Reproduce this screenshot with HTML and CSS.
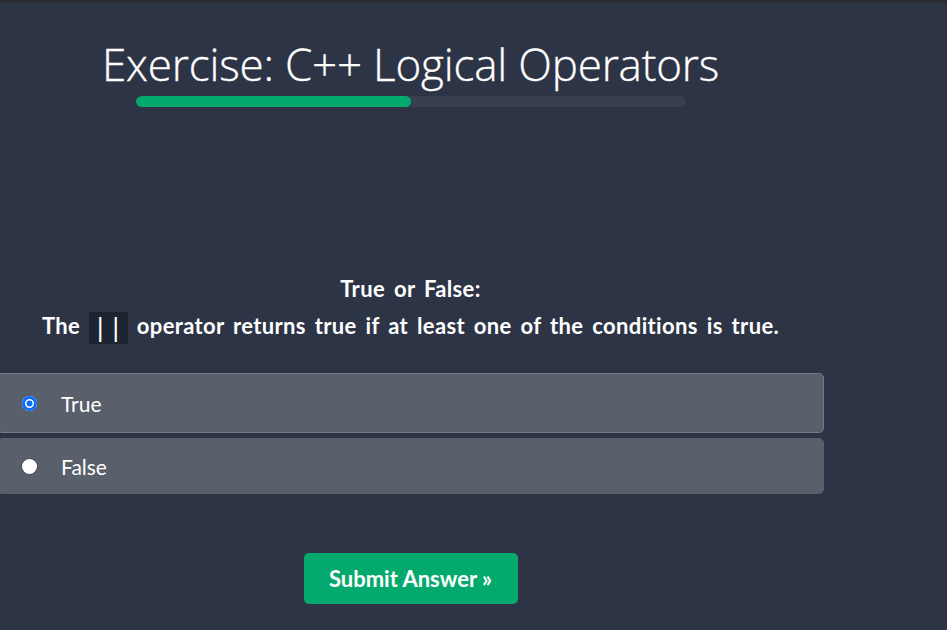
FILE: index.html
```html
<!DOCTYPE html>
<html lang="en">
<head>
<meta charset="utf-8">
<title>Exercise: C++ Logical Operators</title>
<link rel="stylesheet" href="styles.css">
</head>
<body>
<div class="topstrip"></div>
<main class="page">
  <h1 class="title">Exercise: C++ Logical Operators</h1>
  <div class="progress"><div class="progress-fill" style="width:50%"></div></div>
  <div class="question">
    <p class="q-line">True or False:</p>
    <p class="q-line">The <code class="code">||</code> operator returns true if at least one of the conditions is true.</p>
  </div>
  <div class="options">
    <label class="option option-active"><input type="radio" name="ans" class="radio" checked><span class="opt-text">True</span></label>
    <label class="option"><input type="radio" name="ans" class="radio"><span class="opt-text">False</span></label>
  </div>
  <div class="actions">
    <button class="submit" type="button">Submit Answer »</button>
  </div>
</main>
</body>
</html>
```
FILE: styles.css
```css
html, body {
  margin: 0;
  padding: 0;
  background: #2d3446;
  height: 100%;
  overflow: hidden;
}
.topstrip {
  height: 3px;
  background: #2a2a31;
}
.page {
  width: 827px;
  margin-left: -3px;
  text-align: center;
  color: #fff;
}
.title {
  margin: 0;
  padding-top: 35px;
  font: 300 44px/52px "Open Sans", sans-serif;
  letter-spacing: -0.2px;
  -webkit-text-stroke: 0.3px #fff;
}
.progress {
  width: 550px;
  height: 11px;
  margin: 6px 0 0 139px;
  background: #38404e;
  border-radius: 6px;
  overflow: hidden;
}
.progress-fill {
  height: 100%;
  background: #04aa6d;
  border-radius: 6px;
}
.question {
  margin-top: 163px;
  font: 700 22px/37px "Lato", sans-serif;
  letter-spacing: 0.35px;
  word-spacing: 3.2px;
}
.q-line {
  margin: 0;
}
.code {
  display: inline-block;
  background: #1d2330;
  font: 400 24px/32px "DejaVu Sans Mono", monospace;
  padding: 0 4px;
  border-radius: 3px;
  letter-spacing: 1px;
  word-spacing: 0;
  vertical-align: -2px;
}
.options {
  margin-top: 29px;
  display: flex;
  flex-direction: column;
  gap: 5px;
  text-align: left;
}
.option {
  display: flex;
  align-items: center;
  height: 54px;
  padding-left: 24px;
  background: #595f6b;
  border: 1px solid #595f6b;
  border-radius: 5px;
  font: 400 21px "Lato", sans-serif;
  color: #fff;
}
.option-active {
  border-color: #747b88;
  height: 58px;
}
.radio {
  appearance: none;
  -webkit-appearance: none;
  width: 15px;
  height: 15px;
  margin: 0 24px 0 0;
  border-radius: 50%;
  background: #fff;
  box-shadow: 0 0 0 1px rgba(0, 0, 0, 0.15);
  flex: none;
}
.radio:checked {
  background: #0b6cf5;
  box-shadow: inset 0 0 0 3px #0b6cf5, inset 0 0 0 4.5px #fff;
}
.actions {
  margin-top: 59px;
  display: flex;
  justify-content: center;
}
.submit {
  background: #04aa6d;
  color: #fff;
  border: 0;
  border-radius: 5px;
  width: 214px;
  height: 51px;
  font: 700 22px "Lato", sans-serif;
}
```
